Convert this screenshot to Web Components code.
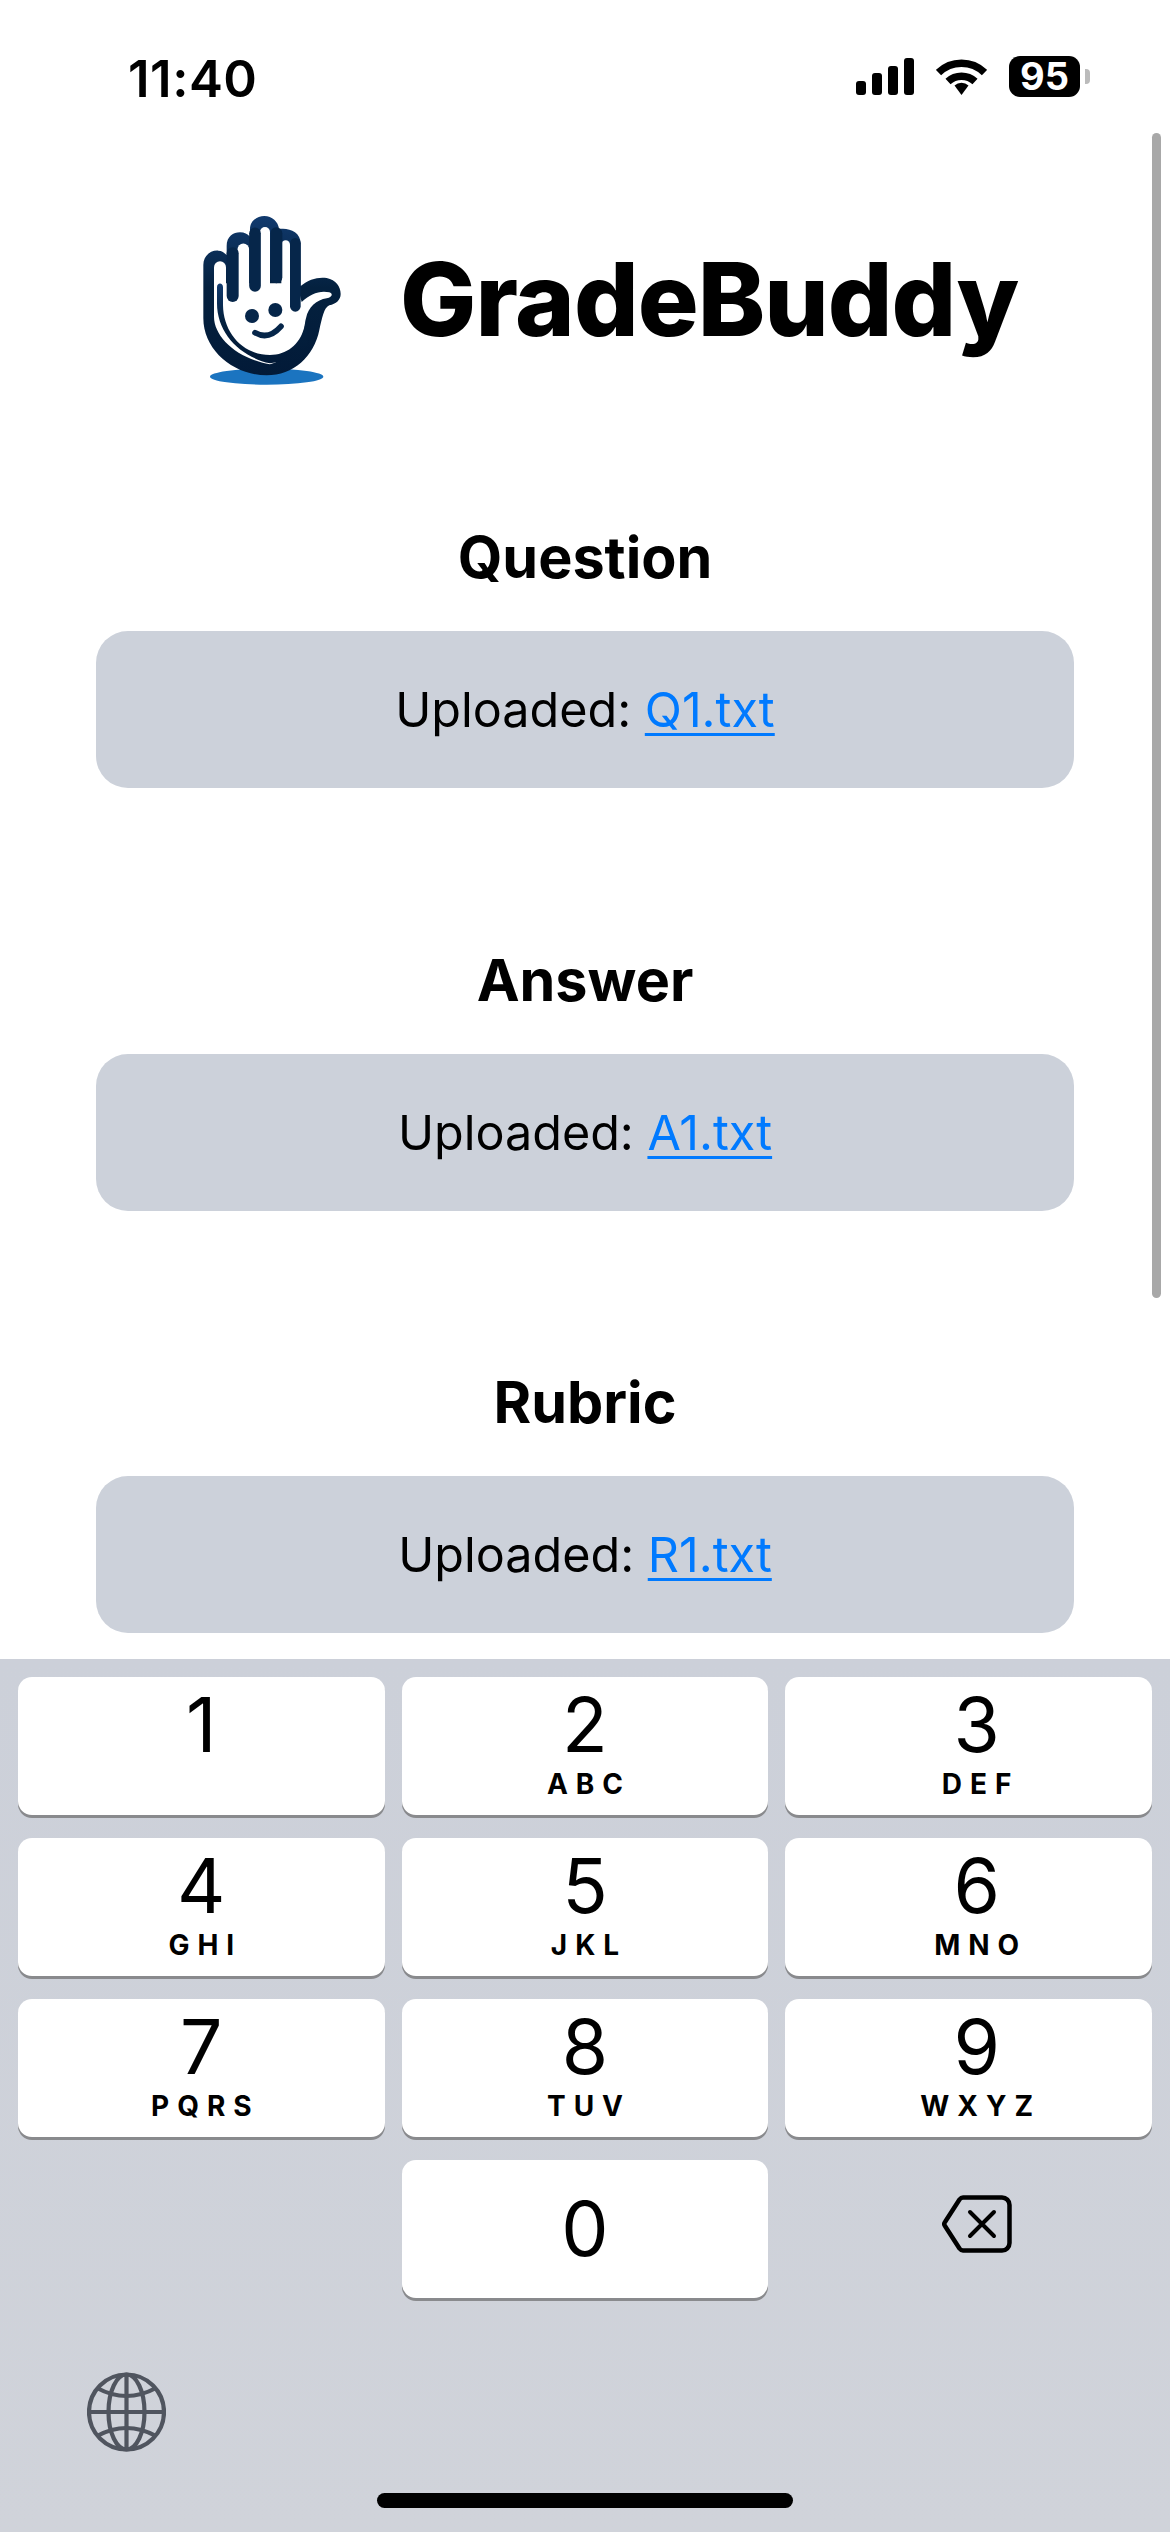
<!DOCTYPE html>
<html>
<head>
<meta charset="utf-8">
<title>GradeBuddy</title>
<style>
  html, body { margin: 0; padding: 0; background: #fff; }
  body { font-family: "Inter", "Liberation Sans", sans-serif; color: #000; }
</style>
</head>
<body>
<phone-screen>
  <status-bar slot="status" time="11:40" battery="95"></status-bar>
  <brand-header slot="content" name="GradeBuddy"></brand-header>
  <upload-card slot="content" label="Question" file="Q1.txt"></upload-card>
  <upload-card slot="content" label="Answer" file="A1.txt"></upload-card>
  <upload-card slot="content" label="Rubric" file="R1.txt"></upload-card>
  <number-pad slot="keyboard"></number-pad>
</phone-screen>

<script>
class PhoneScreen extends HTMLElement {
    constructor() {
        super();
        this.attachShadow({ mode: 'open' });
        this.shadowRoot.innerHTML = `
        <style>
          :host { display: flex; flex-direction: column; position: relative; width: 1170px; height: 2532px; overflow: hidden; background: #fff; }
          .content { flex: 1; min-height: 0; overflow: hidden; }
          .scrollbar { position: absolute; left: 1152px; top: 133px; width: 9px; height: 1165px; border-radius: 5px; background: #a8a8a8; }
        </style>
        <slot name="status"></slot>
        <div class="content"><slot name="content"></slot></div>
        <slot name="keyboard"></slot>
        <div class="scrollbar"></div>`;
    }
}

class StatusBar extends HTMLElement {
    constructor() {
        super();
        this.attachShadow({ mode: 'open' });
    }

    connectedCallback() {
        this.shadowRoot.innerHTML = `
        <style>
          :host { display: flex; justify-content: space-between; align-items: flex-start; height: 130px; box-sizing: border-box; padding: 58px 90px 0 128px; font-family: "Inter", sans-serif; }
          .time { font-size: 51px; font-weight: 600; line-height: 41px; letter-spacing: 0.5px; }
          .icons { display: flex; align-items: center; height: 37px; }
          svg { display: block; }
          .wifi { margin-left: 22px; }
          .battery { position: relative; margin-left: 22px; width: 71px; height: 41px; border-radius: 11px; background: #000; color: #fff; font-size: 38px; font-weight: 700; line-height: 41px; text-align: center; }
          .battery::after { content: ""; position: absolute; left: 76px; top: 13px; width: 5px; height: 15px; border-radius: 0 4px 4px 0; background: #bbb; }
        </style>
        <span class="time">${this.getAttribute("time")}</span>
        <div class="icons">
          <svg width="58" height="37" viewBox="0 0 58 37" fill="#000">
            <rect x="0" y="23" width="10" height="14" rx="3"/>
            <rect x="16" y="15" width="10" height="22" rx="3"/>
            <rect x="32" y="8" width="10" height="29" rx="3"/>
            <rect x="48" y="0" width="10" height="37" rx="3"/>
          </svg>
          <svg class="wifi" width="51" height="37" viewBox="0 0 51 37">
            <path d="M2.5 14.5 A33 33 0 0 1 48.5 14.5" fill="none" stroke="#000" stroke-width="7.5" stroke-linecap="butt"/>
            <path d="M12 23.5 A20 20 0 0 1 39 23.5" fill="none" stroke="#000" stroke-width="7.5"/>
            <path d="M25.5 37 L18.5 27.5 A10.5 10.5 0 0 1 32.5 27.5 Z" fill="#000"/>
          </svg>
          <div class="battery">${this.getAttribute("battery")}</div>
        </div>`;
    }
}

class BrandHeader extends HTMLElement {
    constructor() {
        super();
        this.attachShadow({ mode: 'open' });
    }

    connectedCallback() {
        this.shadowRoot.innerHTML = `
        <style>
          :host { display: flex; align-items: center; height: 210px; margin: 60px 0 121px 170px; font-family: "Inter", sans-serif; }
          svg { display: block; flex: none; }
          h1 { margin: 10px 0 0 30px; font-size: 101.6px; font-weight: 800; line-height: 1; letter-spacing: -1px; }
        </style>
        <svg width="200" height="210" viewBox="0 0 600 630">
          <defs>
            <linearGradient id="navy" x1="0" y1="0" x2="0" y2="1">
              <stop offset="0" stop-color="#113a6e"/>
              <stop offset="0.45" stop-color="#04213f"/>
              <stop offset="1" stop-color="#021a38"/>
            </linearGradient>
          </defs>
          <ellipse cx="290" cy="560" rx="170" ry="24" fill="#1b74c0"/>
          <path fill="url(#navy)" d="M100 225 C100 195 125 180 145 182 C155 182 163 188 170 195 L170 168 C170 140 190 127 210 127 C224 127 232 132 240 140 L240 118 C240 92 262 78 283 78 C306 78 325 95 327 117 C355 112 392 125 392 160 L392 288 C415 268 445 260 470 264 C498 270 512 290 512 312 C512 330 498 342 478 346 C462 352 456 385 448 420 C432 500 370 556 290 556 C190 556 100 480 100 385 Z"/>
          <g fill="none" stroke="#fff" stroke-linecap="round">
            <path d="M150 232 V340" stroke-width="36"/>
            <path d="M220 178 V340" stroke-width="35"/>
            <path d="M285 126 V320" stroke-width="30"/>
            <path d="M347 164 V320" stroke-width="26"/>
          </g>
          <path fill="#fff" d="M132 280 H380 L395 336 C420 312 450 300 478 307 C490 311 487 322 470 325 C440 330 415 350 408 385 C403 440 380 500 300 523 C200 505 132 440 132 380 Z"/>
          <path fill="url(#navy)" d="M141 292 C141 277 159 277 159 292 L159 345 C160 430 220 495 300 495 C350 495 388 465 402 415 L408 385 L412 470 L330 515 L300 520 C210 500 141 430 141 340 Z"/>
          <g fill="none" stroke="#06264a" stroke-linecap="round">
            <path d="M188 190 V318" stroke-width="36"/>
            <path d="M255 130 V288" stroke-width="35"/>
            <path d="M319 130 V262" stroke-width="36"/>
            <path d="M376 160 V349" stroke-width="32"/>
          </g>
          <circle cx="246" cy="378" r="21" fill="#06264a"/>
          <circle cx="316" cy="360" r="21" fill="#06264a"/>
          <path d="M255 428 Q295 452 333 409" fill="none" stroke="#06264a" stroke-width="17" stroke-linecap="round"/>
        </svg>
        <h1>${this.getAttribute("name")}</h1>`;
    }
}

class UploadCard extends HTMLElement {
    constructor() {
        super();
        this.attachShadow({ mode: 'open' });
    }

    connectedCallback() {
        this.shadowRoot.innerHTML = `
        <style>
          :host { display: block; margin: 0 96px 155.5px; font-family: "Inter", sans-serif; text-align: center; }
          h2 { margin: 0; font-size: 57.5px; font-weight: 700; line-height: 72px; }
          .box { display: flex; align-items: center; justify-content: center; height: 157px; margin-top: 38px; border-radius: 32px; background: #ccd1da; font-size: 48.5px; }
          a { margin-left: 0.28em; color: #007aff; text-decoration: underline; text-decoration-thickness: 3px; text-underline-offset: 6px; }
        </style>
        <h2>${this.getAttribute("label")}</h2>
        <div class="box"><span>Uploaded:</span><a href="#">${this.getAttribute("file")}</a></div>`;
    }
}

class NumKey extends HTMLElement {
    constructor() {
        super();
        this.attachShadow({ mode: 'open' });
    }

    connectedCallback() {
        const letters = this.getAttribute("letters");
        this.shadowRoot.innerHTML = `
        <style>
          :host { display: flex; flex-direction: column; align-items: center; box-sizing: border-box; height: 138px; padding-top: 10px; border-radius: 14px; background: #fff; box-shadow: 0 3px 0 #898a8d; font-family: "Inter", sans-serif; }
          :host(:nth-child(3n)) { padding-left: 16px; }
          :host([lone]) { justify-content: center; padding-top: 0; }
          .digit { font-size: 75px; font-weight: 400; line-height: 76px; }
          .letters { margin: 6px 0 0 8px; font-size: 28px; font-weight: 700; line-height: 30px; letter-spacing: 8px; }
        </style>
        <span class="digit">${this.getAttribute("digit")}</span>
        ${letters ? `<span class="letters">${letters}</span>` : ""}`;
    }
}

class NumberPad extends HTMLElement {
    constructor() {
        super();
        this.attachShadow({ mode: 'open' });
        this.shadowRoot.innerHTML = `
        <style>
          :host { display: block; height: 873px; box-sizing: border-box; padding: 18px 18px 0; background: linear-gradient(#ccd0d9, #d0d3da); }
          .keys { display: grid; grid-template-columns: repeat(3, 1fr); column-gap: 17px; row-gap: 23px; }
          .del { display: flex; align-items: center; justify-content: center; height: 128px; padding: 0 0 10px 16px; }
          svg { display: block; }
          .globe { margin: 74px 0 0 69px; }
          .home { width: 416px; height: 15px; margin: 41px auto 0; border-radius: 8px; background: #000; }
        </style>
        <div class="keys">
          <num-key digit="1"></num-key>
          <num-key digit="2" letters="ABC"></num-key>
          <num-key digit="3" letters="DEF"></num-key>
          <num-key digit="4" letters="GHI"></num-key>
          <num-key digit="5" letters="JKL"></num-key>
          <num-key digit="6" letters="MNO"></num-key>
          <num-key digit="7" letters="PQRS"></num-key>
          <num-key digit="8" letters="TUV"></num-key>
          <num-key digit="9" letters="WXYZ"></num-key>
          <div></div>
          <num-key digit="0" lone></num-key>
          <div class="del">
            <svg width="70" height="58" viewBox="0 0 70 58" fill="none" stroke="#000" stroke-linejoin="round" stroke-linecap="round">
              <path d="M21 2.5 H60 A7.5 7.5 0 0 1 67.5 10 V48 A7.5 7.5 0 0 1 60 55.5 H21 Q19 55.5 17.5 53.5 L3 31 Q1.5 29 3 27 L17.5 4.5 Q19 2.5 21 2.5 Z" stroke-width="4.5"/>
              <path d="M28 17 L52 41 M52 17 L28 41" stroke-width="4"/>
            </svg>
          </div>
        </div>
        <svg class="globe" width="79" height="80" viewBox="0 0 79 80" fill="none" stroke="#50555f" stroke-width="4.2">
          <circle cx="39.5" cy="40" r="37.5"/>
          <ellipse cx="39.5" cy="40" rx="18" ry="37.5"/>
          <path d="M39.5 2.5 V77.5 M2 40 H77"/>
          <path d="M10 16 Q39.5 32 69 16 M10 64 Q39.5 48 69 64"/>
        </svg>
        <div class="home"></div>`;
    }
}

customElements.define('phone-screen', PhoneScreen);
customElements.define('status-bar', StatusBar);
customElements.define('brand-header', BrandHeader);
customElements.define('upload-card', UploadCard);
customElements.define('num-key', NumKey);
customElements.define('number-pad', NumberPad);
</script>
</body>
</html>
